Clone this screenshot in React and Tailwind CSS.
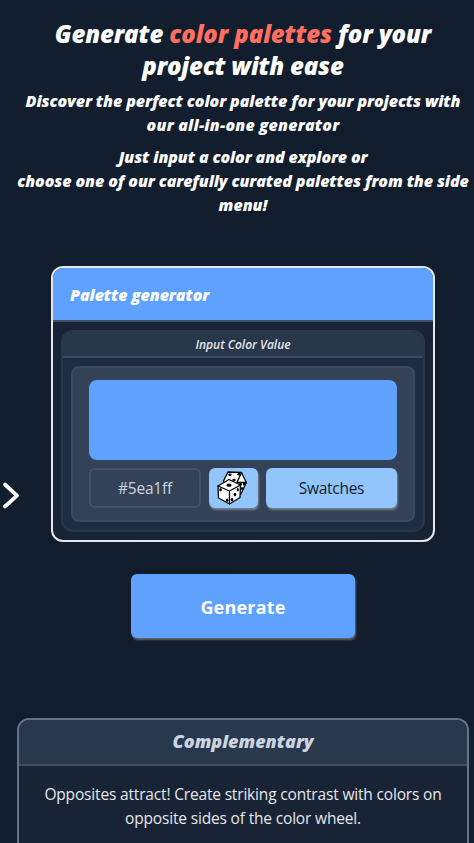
const display = "font-['Open_Sans','Lato',sans-serif] font-extrabold italic";
const body = "font-['Open_Sans','Noto_Sans',sans-serif]";

function Dice() {
  return (
    <svg width="30" height="34" viewBox="0 0 30 34" fill="#fff" stroke="#000" strokeWidth="1.3" strokeLinejoin="round" strokeLinecap="round">
      <path d="M6.5 10 L11 1 L24.5 1.5 L29.3 11.5 L24 23 L12 22Z" />
      <path d="M20 11.5 L24.5 1.5 M20 11.5 L29.3 11.5" fill="none" />
      <path d="M1 15 L12 8.5 L23.5 14 L23 26.5 L12.5 33 L1.5 27Z" />
      <path d="M1 15 L12.5 20 L23.5 14 M12.5 20 V33" fill="none" />
      <g fill="#000" stroke="none">
        <ellipse cx="12" cy="14.2" rx="2.6" ry="1.6" />
        <ellipse cx="13" cy="3.7" rx="1.7" ry="1.2" />
        <ellipse cx="22" cy="3.3" rx="1.7" ry="1.2" />
        <ellipse cx="17" cy="9" rx="1.7" ry="1.2" />
        <ellipse cx="23.5" cy="13.3" rx="1.4" ry="1.3" />
        <ellipse cx="27" cy="13" rx="1.2" ry="1.5" />
        <ellipse cx="25" cy="17.5" rx="1.1" ry="1.6" />
        <ellipse cx="3.6" cy="18.8" rx="1.3" ry="1.8" />
        <ellipse cx="10.2" cy="29.3" rx="1.3" ry="1.8" />
        <ellipse cx="20.8" cy="18.8" rx="1.1" ry="1.7" />
        <ellipse cx="18" cy="23.6" rx="1.3" ry="1.8" />
        <ellipse cx="15" cy="28.8" rx="1.3" ry="1.8" />
      </g>
    </svg>
  );
}

export default function App() {
  return (
    <div className="relative h-[843px] w-[474px] overflow-hidden bg-gradient-to-br from-[#131e2f] via-[#111c2c] to-[#131e2f]">
      <svg className="absolute left-0 top-[480px]" width="22" height="32" viewBox="0 0 22 32" fill="none" stroke="#fff" strokeWidth="3.8" strokeLinecap="round" strokeLinejoin="round">
        <path d="M5 4.5 L17 15.7 L5 26.5" />
      </svg>

      <main className="ml-[17px] flex w-[452px] flex-col items-center">
        <header className={`${display} flex flex-col items-center whitespace-nowrap pt-[18px] text-center text-white`}>
          <h1 className="text-2xl leading-8">
            <span className="block tracking-[-0.13px]">
              Generate <span className="text-[#ff6f61]">color palettes</span> for your
            </span>
            <span className="block tracking-[-0.2px]">project with ease</span>
          </h1>
          <p className="mt-[7px] text-base leading-6">
            <span className="block tracking-[-0.09px]">Discover the perfect color palette for your projects with</span>
            <span className="block tracking-[0.2px]">our all-in-one generator</span>
          </p>
          <p className="mt-2 text-base leading-6">
            <span className="block tracking-[-0.12px]">Just input a color and explore or</span>
            <span className="block tracking-[-0.1px]">choose one of our carefully curated palettes from the side</span>
            <span className="block">menu!</span>
          </p>
        </header>

        <section className="mt-[49px] h-[276px] w-96 overflow-hidden rounded-xl border-2 border-[#e5e7eb] bg-[#182436]">
          <h2 className={`${display} h-[54px] border-b-2 border-[#3f5066] bg-[#5ea1ff] pl-[17px] text-base leading-[54px] tracking-[-0.08px] text-white`}>
            Palette generator
          </h2>
          <div className="mx-2 mt-2 h-[202px] overflow-hidden rounded-xl border-2 border-[#28374a] bg-[#1f2d43]">
            <h3 className="h-[26px] border-b-2 border-[#3b4a60] bg-[#28374a] text-center font-['Open_Sans',sans-serif] text-xs font-semibold italic leading-[25px] text-gray-200">
              Input Color Value
            </h3>
            <div className="mx-2 mt-2 h-[156px] rounded-lg border-2 border-[#3b4a60] bg-[#334257] px-4 pt-3">
              <div className="h-20 rounded-lg bg-[#5ea1ff]" />
              <div className={`${body} mt-2 flex h-10 gap-2 text-[15.5px]`}>
                <div className="flex w-28 items-center justify-center rounded-md border-2 border-[#465366] pt-0.5 text-[#cbd5e1]">
                  <span className="tracking-[-0.2px]">#5ea1ff</span>
                </div>
                <button className="flex w-[49px] items-center rounded-md bg-[#93c5fd] pl-2 shadow-[1px_2px_2px_#74808f]">
                  <Dice />
                </button>
                <button className="flex-1 rounded-md bg-[#93c5fd] pt-0.5 text-[#111c2c] shadow-[1px_2px_2px_#74808f]">
                  <span className="tracking-[-0.3px]">Swatches</span>
                </button>
              </div>
            </div>
          </div>
        </section>

        <button className={`${body} mt-8 h-16 w-56 rounded-md bg-[#5ea1ff] pt-0.5 text-lg font-bold text-white shadow-[1px_2px_2px_#5c6470]`}>
          <span className="tracking-[0.2px]">Generate</span>
        </button>

        <section className="mt-20 h-[140px] w-full overflow-hidden rounded-t-xl border-2 border-b-0 border-[#64748b] bg-[#182436]">
          <h2 className={`${display} h-[46px] border-b-2 border-[#3f4d61] bg-[#28384d] text-center text-lg leading-[43px] text-[#cbd5e1]`}>
            Complementary
          </h2>
          <p className={`${body} whitespace-nowrap pt-4 text-center text-[15.5px] leading-6 text-gray-200`}>
            <span className="block tracking-[-0.17px]">Opposites attract! Create striking contrast with colors on</span>
            <span className="block tracking-[-0.17px]">opposite sides of the color wheel.</span>
          </p>
        </section>
      </main>
    </div>
  );
}
